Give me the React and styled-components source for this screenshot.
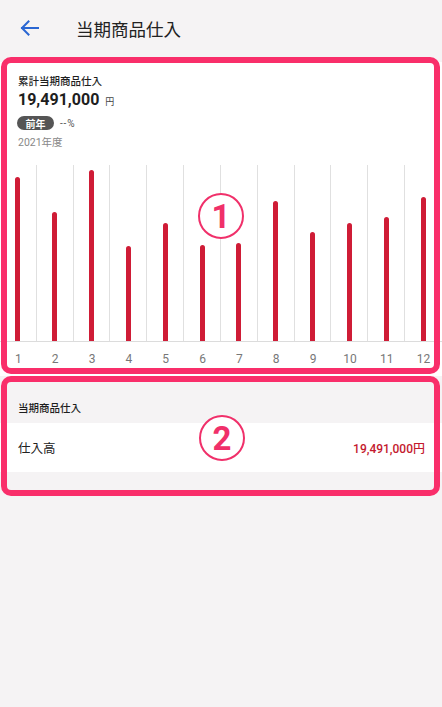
import React from "react";
import styled, { createGlobalStyle } from "styled-components";

const GlobalStyle = createGlobalStyle`
  html, body {
    margin: 0;
    padding: 0;
    background: #f5f3f4;
  }
  body {
    font-family: Roboto, "Noto Sans CJK JP", "Noto Sans", sans-serif;
    color: #222;
  }
  * { box-sizing: border-box; }
`;

const Page = styled.div`
  position: relative;
  width: 442px;
  min-height: 707px;
  background: #f5f3f4;
`;

const Header = styled.header`
  height: 56px;
  display: flex;
  align-items: center;
  padding-left: 20px;
  gap: 37px;
`;

const BackButton = styled.button`
  border: 0;
  background: transparent;
  padding: 0;
  width: 19px;
  height: 19px;
  display: flex;
  align-items: center;
  justify-content: center;
`;

const Title = styled.h1`
  margin: 0;
  font-size: 17.5px;
  font-weight: 400;
  color: #222;
`;

const SummaryCard = styled.section`
  margin-top: 6px;
  background: #fff;
  padding-top: 12px;
  padding-bottom: 4px;
`;

const SummaryInfo = styled.div`
  padding: 0 18px;
  display: flex;
  flex-direction: column;
`;

const Caption = styled.div`
  font-size: 10.5px;
  font-weight: 500;
  line-height: 16px;
  color: #1e1e1e;
`;

const AmountLine = styled.div`
  display: flex;
  align-items: baseline;
  gap: 6px;
  line-height: 20px;
`;

const Amount = styled.span`
  font-size: 16px;
  font-weight: 700;
  color: #1e1e1e;
`;

const Unit = styled.span`
  font-size: 9px;
  color: #444;
`;

const CompareRow = styled.div`
  display: flex;
  align-items: center;
  gap: 6px;
  margin-top: 4px;
  height: 14px;
`;

const Badge = styled.span`
  display: inline-flex;
  align-items: center;
  justify-content: center;
  width: 37px;
  height: 14px;
  border-radius: 7px;
  background: #555;
  color: #fff;
  font-size: 10px;
  font-weight: 700;
  margin-left: -1px;
`;

const Rate = styled.span`
  font-size: 10px;
  color: #555;
  letter-spacing: 0.8px;
`;

const FiscalYear = styled.div`
  font-size: 10.5px;
  color: #888;
  line-height: 16px;
  margin-top: 5px;
`;

const Chart = styled.div`
  margin-top: 14px;
`;

const Plot = styled.div`
  display: grid;
  grid-template-columns: repeat(12, 1fr);
  height: 177px;
  border-bottom: 1px solid #dcdcdc;
`;

const Column = styled.div`
  display: flex;
  align-items: flex-end;
  justify-content: center;
  border-right: 1px solid #e0e0e0;
  &:last-child { border-right: 0; }
`;

const Bar = styled.div`
  width: 5px;
  background: #cf1c36;
  border-radius: 3px 3px 0 0;
`;

const Labels = styled.div`
  display: grid;
  grid-template-columns: repeat(12, 1fr);
  height: 30px;
  align-items: center;
`;

const Label = styled.span`
  text-align: center;
  font-size: 12px;
  color: #777;
  padding-top: 4px;
`;

const DetailSection = styled.section`
  margin-top: 6px;
`;

const SectionTitle = styled.div`
  font-size: 10.5px;
  font-weight: 500;
  color: #1e1e1e;
  padding: 19px 18px 7px;
  line-height: 15px;
`;

const Row = styled.div`
  display: flex;
  align-items: center;
  justify-content: space-between;
  height: 49px;
  background: #fff;
  padding: 0 17px 0 18px;
`;

const RowLabel = styled.span`
  font-size: 12.5px;
  color: #222;
`;

const RowValue = styled.span`
  font-size: 12px;
  font-weight: 500;
  color: #c41a2e;
`;

const Frame = styled.div`
  position: absolute;
  left: ${(p) => p.$left}px;
  top: ${(p) => p.$top}px;
  width: ${(p) => p.$width}px;
  height: ${(p) => p.$height}px;
  border: 6px solid #f92e6a;
  border-radius: 10px;
  pointer-events: none;
`;

const Marker = styled.div`
  position: absolute;
  left: ${(p) => p.$x - 23}px;
  top: ${(p) => p.$y - 23}px;
  width: 46px;
  height: 46px;
  border-radius: 50%;
  border: 2.5px solid #f0306a;
  background: #fff;
  color: #f0306a;
  display: flex;
  align-items: center;
  justify-content: center;
  font-family: Roboto, "Noto Sans", sans-serif;
  font-size: 33px;
  font-weight: 700;
  line-height: 1;
  padding-top: 1px;
`;

const months = [1, 2, 3, 4, 5, 6, 7, 8, 9, 10, 11, 12];
const heights = [164, 129, 171, 95, 118, 96, 98, 140, 109, 118, 124, 144];

export default function App() {
  return (
    <>
      <GlobalStyle />
      <Page>
        <Header>
          <BackButton aria-label="戻る">
            <svg width="19" height="16" viewBox="0 0 19 16" fill="none">
              <path
                d="M18 8H2M8.5 1.5L2 8l6.5 6.5"
                stroke="#2a66d2"
                strokeWidth="2"
                strokeLinecap="square"
              />
            </svg>
          </BackButton>
          <Title>当期商品仕入</Title>
        </Header>

        <SummaryCard>
          <SummaryInfo>
            <Caption>累計当期商品仕入</Caption>
            <AmountLine>
              <Amount>19,491,000</Amount>
              <Unit>円</Unit>
            </AmountLine>
            <CompareRow>
              <Badge>前年</Badge>
              <Rate>--%</Rate>
            </CompareRow>
            <FiscalYear>2021年度</FiscalYear>
          </SummaryInfo>
          <Chart>
            <Plot>
              {months.map((m, i) => (
                <Column key={m}>
                  <Bar style={{ height: heights[i] }} />
                </Column>
              ))}
            </Plot>
            <Labels>
              {months.map((m) => (
                <Label key={m}>{m}</Label>
              ))}
            </Labels>
          </Chart>
        </SummaryCard>

        <DetailSection>
          <SectionTitle>当期商品仕入</SectionTitle>
          <Row>
            <RowLabel>仕入高</RowLabel>
            <RowValue>19,491,000円</RowValue>
          </Row>
        </DetailSection>

        <Frame $left={1} $top={57} $width={439} $height={317} />
        <Frame $left={1} $top={376} $width={439} $height={120} />
        <Marker $x={221} $y={216}>1</Marker>
        <Marker $x={222} $y={438}>2</Marker>
      </Page>
    </>
  );
}
